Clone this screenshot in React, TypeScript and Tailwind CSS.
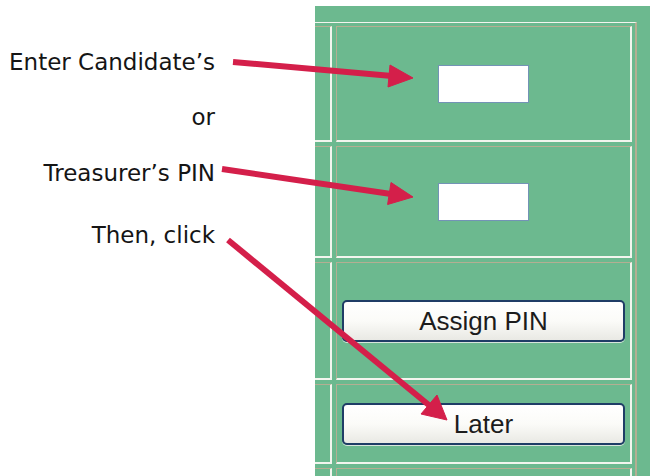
import React from 'react';

const cellBorder =
  'border-t border-l border-b-2 border-r-2 border-t-[#b4ae92] border-l-[#b4ae92] border-b-[#f3f5ee] border-r-[#f3f5ee]';

const PinInput: React.FC = () => (
  <input
    type="text"
    className="w-[91px] h-[38px] bg-white border border-[#7393b6] outline-none"
  />
);

const PinButton: React.FC<{ label: string }> = ({ label }) => (
  <button
    type="button"
    className="w-full h-[42px] rounded-[5px] border-2 border-[#1f3d66] bg-gradient-to-b from-white via-[#fbfbf8] to-[#e9e9e4] text-[26px] leading-none text-[#1c1c1c] shadow-[0_1px_0_#d8e6dc]"
    style={{ fontFamily: '"Liberation Sans", Arial, sans-serif' }}
  >
    {label}
  </button>
);

// red call-out arrows lying over the labels and the form
const Arrows: React.FC = () => (
  <svg
    className="absolute inset-0 pointer-events-none"
    width="650"
    height="476"
    viewBox="0 0 650 476"
  >
    <g fill="#d41f4a" stroke="#d41f4a">
      <line x1="233" y1="62" x2="392" y2="76" strokeWidth="6" />
      <polygon points="413,78 388,87 390,65" strokeWidth="1" strokeLinejoin="round" />

      <line x1="222" y1="169" x2="391" y2="194" strokeWidth="6" />
      <polygon points="413,197 387.6,204.5 391,182.5" strokeWidth="1" strokeLinejoin="round" />

      <line x1="228" y1="240" x2="430" y2="406" strokeWidth="6" />
      <polygon points="447,420 421,414 437,395" strokeWidth="1" strokeLinejoin="round" />
    </g>
  </svg>
);

const App: React.FC = () => {
  return (
    <div className="relative w-[650px] h-[476px] bg-white overflow-hidden flex">
      {/* labels */}
      <div
        className="w-[315px] shrink-0 pr-[100px] flex flex-col items-end text-[23px] leading-[28px] text-[#151515]"
        style={{ fontFamily: '"DejaVu Sans", Verdana, sans-serif' }}
      >
        <div className="mt-[48px] whitespace-nowrap">Enter Candidate’s</div>
        <div className="mt-[27px]">or</div>
        <div className="mt-[28px] whitespace-nowrap">Treasurer’s PIN</div>
        <div className="mt-[34px] whitespace-nowrap">Then, click</div>
      </div>

      {/* form panel */}
      <div className="flex-1 mt-[6px] h-[470px] bg-[#6cb98f] overflow-hidden pt-[16px]">
        <div className="-ml-[10px] w-[332px] border-t border-t-[#f3f5ee] border-r-2 border-r-[#b4ae92] p-[3px] grid grid-cols-[24px_1fr] grid-rows-[116px_112px_118px_80px_60px] gap-[4px]">
          <div className={cellBorder} />
          <div className={`${cellBorder} flex items-center justify-center`}>
            <PinInput />
          </div>

          <div className={cellBorder} />
          <div className={`${cellBorder} flex items-center justify-center`}>
            <PinInput />
          </div>

          <div className={cellBorder} />
          <div className={`${cellBorder} flex items-center px-[5px]`}>
            <PinButton label="Assign PIN" />
          </div>

          <div className={cellBorder} />
          <div className={`${cellBorder} flex items-center px-[5px]`}>
            <PinButton label="Later" />
          </div>

          <div className={cellBorder} />
          <div className={cellBorder} />
        </div>
      </div>

      <Arrows />
    </div>
  );
};

export default App;
